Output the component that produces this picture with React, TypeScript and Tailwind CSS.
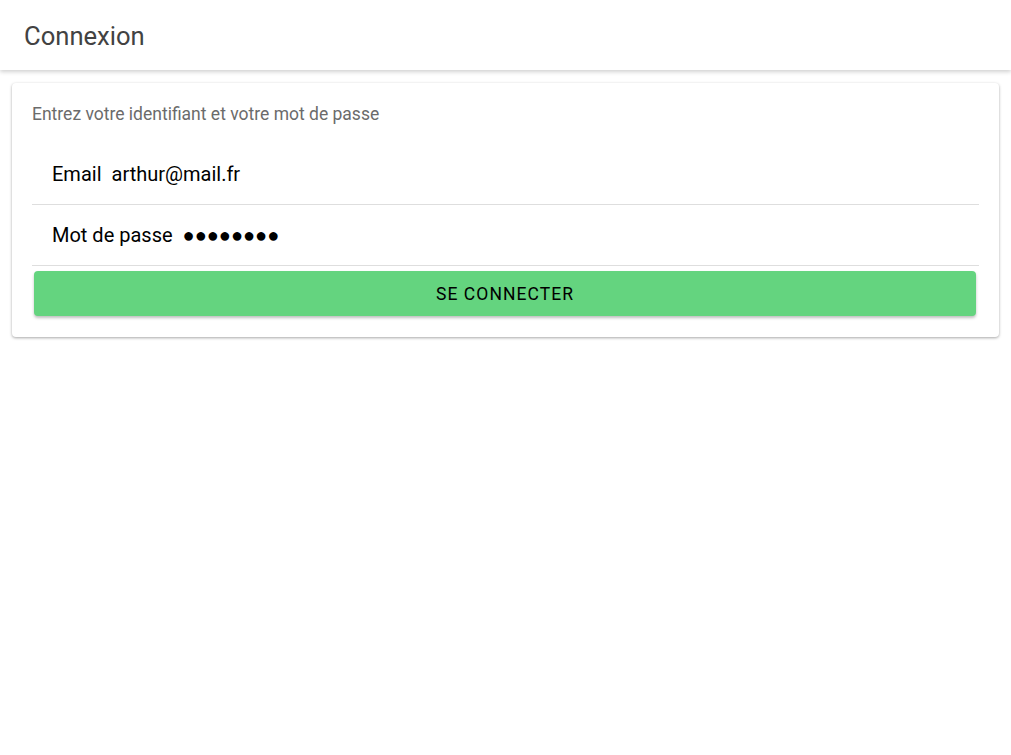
export default function App() {
  return (
    <div className="min-h-screen bg-white" style={{ fontFamily: "Roboto, 'Noto Sans', sans-serif" }}>
      <header className="h-[70px] flex items-center px-6 pt-[3px] bg-white shadow-[0_2px_4px_rgba(0,0,0,0.18)] relative z-10">
        <h1 className="text-[25.6px] text-[#424242] font-normal">Connexion</h1>
      </header>
      <div className="px-3 pt-[13px]">
        <div className="bg-white rounded-[4px] shadow-[0_1px_3px_rgba(0,0,0,0.35)] px-5 pb-[21px]">
          <div className="pt-5 pb-[19px] text-[17.5px] leading-[22px] text-[#6b6b6b]">
            Entrez votre identifiant et votre mot de passe
          </div>
          <div className="flex items-center h-[61px] border-b border-[#dedede] pl-5 text-[20px] text-black">
            <span>Email</span>
            <span className="ml-[10px]">arthur@mail.fr</span>
          </div>
          <div className="flex items-center h-[61px] border-b border-[#dedede] pl-5 text-[20px] text-black">
            <span>Mot de passe</span>
            <span className="ml-[10px]">●●●●●●●●</span>
          </div>
          <button className="mt-[5px] ml-[2px] mr-[3px] w-[calc(100%-5px)] h-[45px] pt-[2px] rounded-[4px] bg-[#64d47f] text-black text-[17.5px] tracking-[0.06em] shadow-[0_2px_3px_rgba(0,0,0,0.25)] flex items-center justify-center">
            SE CONNECTER
          </button>
        </div>
      </div>
    </div>
  );
}
